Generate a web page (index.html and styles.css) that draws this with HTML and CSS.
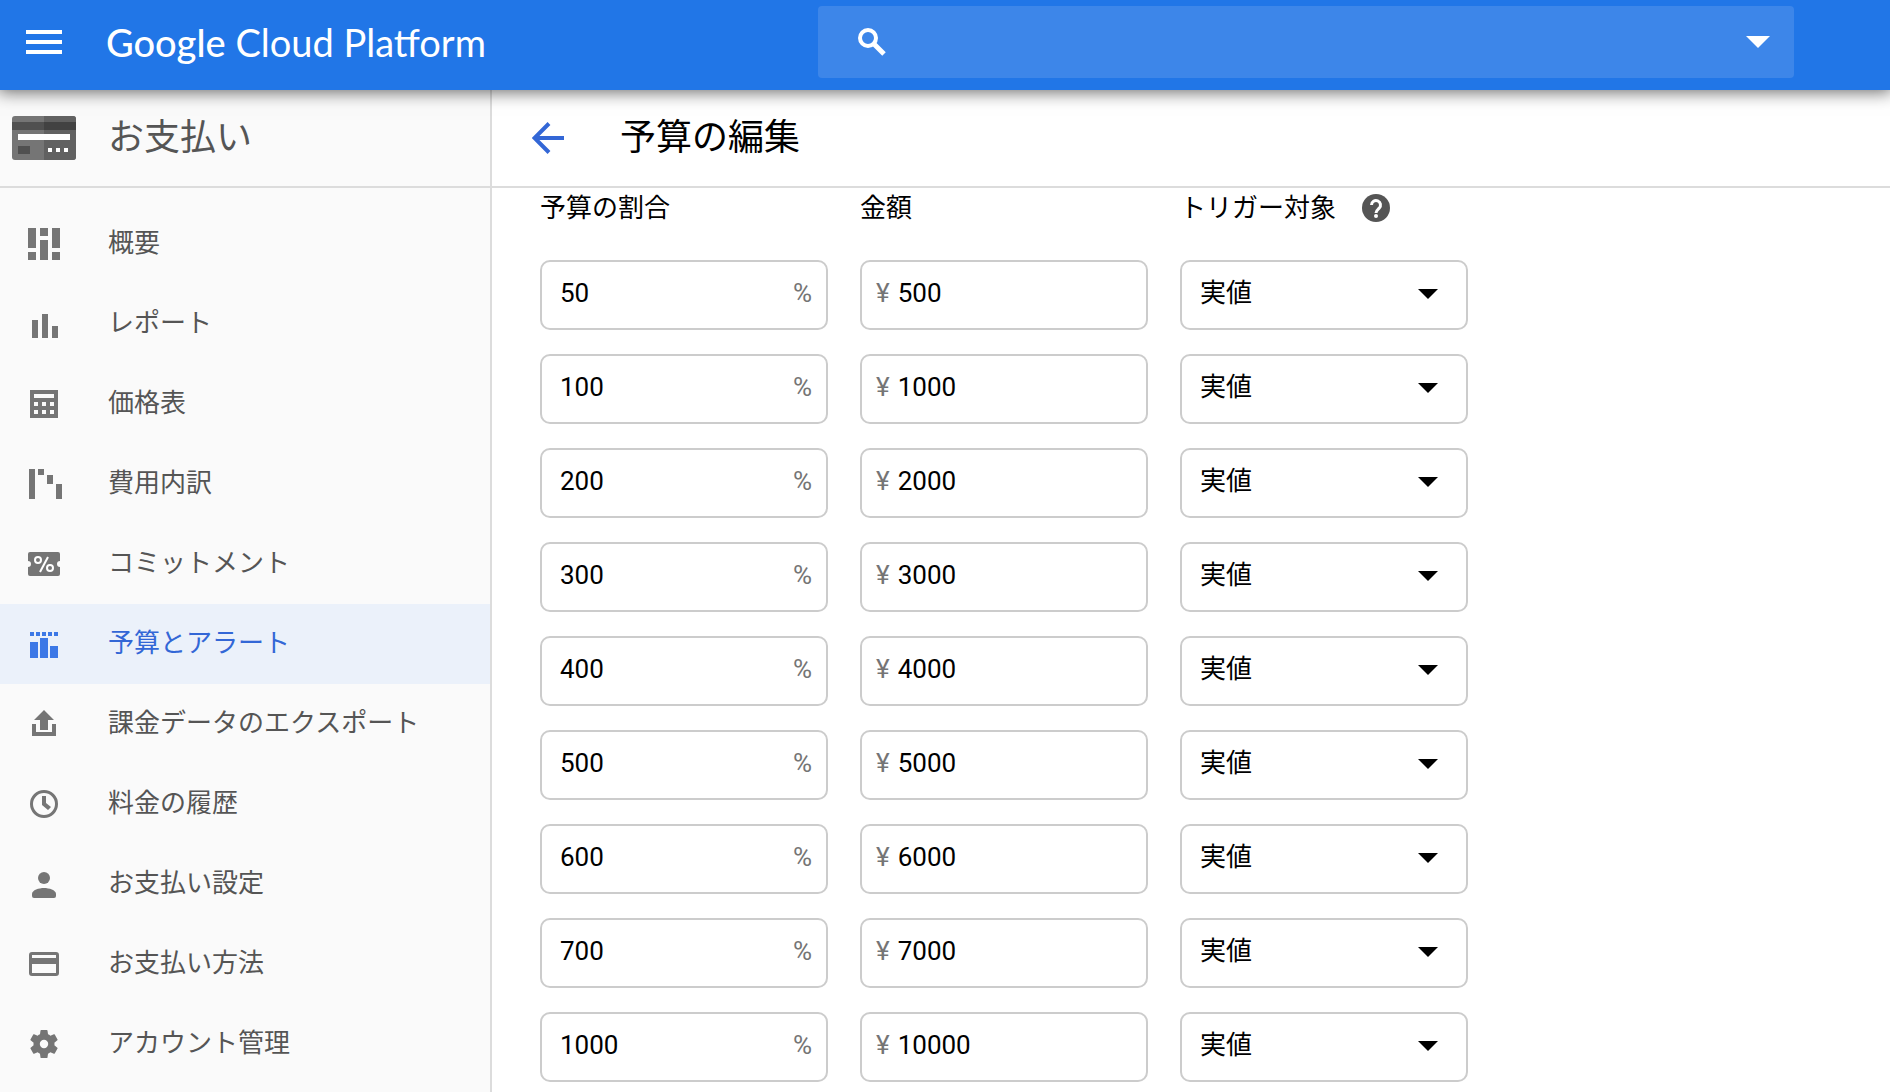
FILE: index.html
```
<!DOCTYPE html>
<html lang="ja">
<head>
<meta charset="utf-8">
<meta name="viewport" content="width=device-width, initial-scale=1">
<title>予算の編集 - Google Cloud Platform</title>
<link rel="stylesheet" href="styles.css">
</head>
<body>
<header class="topbar">
  <button class="icon-button" type="button" aria-label="メニュー">
    <svg width="36" height="24" viewBox="0 0 36 24" fill="currentColor"><path d="M0 0h36v4H0zM0 10h36v4H0zM0 20h36v4H0z"/></svg>
  </button>
  <a class="brand" href="#"><span class="brand-google">Google</span> Cloud Platform</a>
  <form class="search">
    <svg width="28" height="28" viewBox="0 0 28 28" fill="none" stroke="currentColor"><circle cx="10" cy="10" r="8" stroke-width="4"/><path d="M16 16l10 10" stroke-width="5"/></svg>
    <input class="search-input" type="search" aria-label="検索">
    <button class="icon-button" type="button" aria-label="検索オプション">
      <svg width="24" height="12" viewBox="0 0 24 12" fill="currentColor"><path d="M0 0h24L12 12z"/></svg>
    </button>
  </form>
</header>

<div class="layout">
  <aside class="sidebar">
    <div class="section-head sidebar-head">
      <svg width="64" height="44" viewBox="0 0 64 44"><rect width="64" height="44" rx="3" fill="#757575"/><path d="M32 0h29a3 3 0 0 1 3 3v38a3 3 0 0 1-3 3H32z" fill="#616161"/><path d="M0 6h32v8H0zM6 30h12v8H6z" fill="#505050"/><path d="M32 6h32v8H32z" fill="#424242"/><path d="M6 18h52v6H6zM36 32h4v4h-4zM44 32h4v4h-4zM52 32h4v4h-4z" fill="#fff"/></svg>
      <h2 class="section-title">お支払い</h2>
    </div>
    <nav class="nav" aria-label="お支払い">
      <a class="nav-item" href="#"><svg class="nav-icon" viewBox="0 0 32 32"><path d="M0 0h8v20H0zM0 24h8v8H0zM12 0h8v8h-8zM12 12h8v20h-8zM24 0h8v20h-8zM24 24h8v8h-8z"/></svg><span class="nav-label">概要</span></a>
      <a class="nav-item" href="#"><svg class="nav-icon" viewBox="0 0 32 32"><path d="M4 12h6v18H4zM14 6h6v24h-6zM24 18h6v12h-6z"/></svg><span class="nav-label">レポート</span></a>
      <a class="nav-item" href="#"><svg class="nav-icon" viewBox="0 0 32 32"><path fill-rule="evenodd" d="M2 2h28v28H2zM6 6v4h20V6zM6 14v4h4v-4zM14 14v4h4v-4zM22 14v4h4v-4zM6 22v4h4v-4zM14 22v4h4v-4zM22 22v4h4v-4z"/></svg><span class="nav-label">価格表</span></a>
      <a class="nav-item" href="#"><svg class="nav-icon" viewBox="0 0 32 32"><path d="M1 1h6v30H1zM10 1h6v6h-6zM19 7h6v9h-6zM28 16h6v15h-6z"/></svg><span class="nav-label">費用内訳</span></a>
      <a class="nav-item" href="#"><svg class="nav-icon" viewBox="0 0 32 32"><path d="M2 4h28a2 2 0 0 1 2 2v7a3 3 0 0 0 0 6v7a2 2 0 0 1-2 2H2a2 2 0 0 1-2-2v-7a3 3 0 0 0 0-6V6a2 2 0 0 1 2-2z"/><g fill="none" stroke="#fff" stroke-width="2"><circle cx="10" cy="12" r="3"/><circle cx="22" cy="20" r="3"/><path d="M20 9l-8 15"/></g></svg><span class="nav-label">コミットメント</span></a>
      <a class="nav-item nav-item-active" href="#" aria-current="page"><svg class="nav-icon" viewBox="0 0 32 32"><path d="M2 4h4v4H2zM8 4h4v4H8zM14 4h4v4h-4zM20 4h4v4h-4zM26 4h4v4h-4zM2 14h8v16H2zM12 10h8v20h-8zM22 18h8v12h-8z"/></svg><span class="nav-label">予算とアラート</span></a>
      <a class="nav-item" href="#"><svg class="nav-icon" viewBox="0 0 32 32"><path d="M16 2l10 10h-6v10h-8V12H6zM4 16h4v8h16v-8h4v12H4z"/></svg><span class="nav-label">課金データのエクスポート</span></a>
      <a class="nav-item" href="#"><svg class="nav-icon" viewBox="0 0 32 32"><circle cx="16" cy="16" r="12.5" fill="none" stroke="currentColor" stroke-width="3"/><path d="M14 8h4v7l5 4-3 3-6-5z"/></svg><span class="nav-label">料金の履歴</span></a>
      <a class="nav-item" href="#"><svg class="nav-icon" viewBox="0 0 32 32"><circle cx="16" cy="10" r="6"/><path d="M4 26c0-4 7-6 12-6s12 2 12 6v2a2 2 0 0 1-2 2H6a2 2 0 0 1-2-2z"/></svg><span class="nav-label">お支払い設定</span></a>
      <a class="nav-item" href="#"><svg class="nav-icon" viewBox="0 0 32 32"><path fill-rule="evenodd" d="M4 4h24a3 3 0 0 1 3 3v18a3 3 0 0 1-3 3H4a3 3 0 0 1-3-3V7a3 3 0 0 1 3-3zM4 7v3h24V7zM4 16v9h24v-9z"/></svg><span class="nav-label">お支払い方法</span></a>
      <a class="nav-item" href="#"><svg class="nav-icon" viewBox="0 0 32 32"><path transform="translate(-.8 -.8) scale(1.4)" d="M19.43 12.98c.04-.32.07-.64.07-.98s-.03-.66-.07-.98l2.11-1.65c.19-.15.24-.42.12-.64l-2-3.46c-.12-.22-.39-.3-.61-.22l-2.49 1c-.52-.4-1.08-.73-1.69-.98l-.38-2.65C14.46 2.18 14.25 2 14 2h-4c-.25 0-.46.18-.49.42l-.38 2.65c-.61.25-1.17.59-1.69.98l-2.49-1c-.23-.09-.49 0-.61.22l-2 3.46c-.13.22-.07.49.12.64l2.11 1.65c-.04.32-.07.65-.07.98s.03.66.07.98l-2.11 1.65c-.19.15-.24.42-.12.64l2 3.46c.12.22.39.3.61.22l2.49-1c.52.4 1.08.73 1.69.98l.38 2.65c.03.24.24.42.49.42h4c.25 0 .46-.18.49-.42l.38-2.65c.61-.25 1.17-.59 1.69-.98l2.49 1c.23.09.49 0 .61-.22l2-3.46c.12-.22.07-.49-.12-.64l-2.11-1.65zM12 15a3 3 0 1 1 0-6 3 3 0 0 1 0 6z"/></svg><span class="nav-label">アカウント管理</span></a>
    </nav>
  </aside>

  <main class="main">
    <div class="section-head main-head">
      <button class="icon-button back" type="button" aria-label="戻る">
        <svg width="32" height="32" viewBox="0 0 32 32" fill="none" stroke="currentColor" stroke-width="4"><path d="M32 16H3M17 1.500L2.500 16 17 30.500"/></svg>
      </button>
      <h1 class="section-title">予算の編集</h1>
    </div>
    <form class="thresholds" id="thresholds">
      <div class="column-title" id="col-percent">予算の割合</div>
      <div class="column-title" id="col-amount">金額</div>
      <div class="column-title"><span id="col-trigger">トリガー対象</span>
        <button class="icon-button help" type="button" aria-label="ヘルプ">
          <svg width="28" height="28" viewBox="0 0 28 28" fill="none" stroke="#fff" stroke-width="3"><circle cx="14" cy="14" r="14" fill="currentColor" stroke="none"/><path d="M9.500 11a4.500 4.500 0 1 1 7.700 3.200C15.200 16 14 16.500 14 19"/><circle cx="14" cy="22" r="2" fill="#fff" stroke="none"/></svg>
        </button>
      </div>
    </form>
  </main>
</div>
<script src="app.js"></script>
</body>
</html>
```
FILE: styles.css
```
* {
  box-sizing: border-box;
}

body {
  margin: 0;
  min-height: 100vh;
  display: flex;
  flex-direction: column;
  background: #fff;
  color: #000;
  font-family: Roboto, "Noto Sans CJK JP", sans-serif;
  font-size: 26px;
  line-height: 36px;
}

svg {
  display: block;
  flex: none;
}

input,
select {
  min-width: 0;
  margin: 0;
  padding: 0;
  border: 0;
  outline: 0;
  background: transparent;
  color: inherit;
  font: inherit;
}

.icon-button {
  flex: none;
  padding: 0;
  border: 0;
  background: none;
  color: inherit;
  cursor: pointer;
}

/* Top bar */
.topbar {
  position: relative;
  z-index: 1;
  display: flex;
  align-items: center;
  height: 90px;
  padding: 0 96px 6px 26px;
  background: #2176e7;
  color: #fff;
  box-shadow: 0 0 16px 2px rgba(0, 0, 0, 0.6);
}

.brand {
  margin-left: 44px;
  color: inherit;
  font-family: Lato, sans-serif;
  font-size: 38px;
  line-height: 48px;
  text-decoration: none;
  white-space: nowrap;
}

.brand-google {
  font-weight: 500;
}

.search {
  display: flex;
  align-items: center;
  gap: 24px;
  flex: 0 1 976px;
  height: 72px;
  margin-left: auto;
  padding: 0 24px 0 40px;
  border-radius: 4px;
  background: #3d86e9;
}

.search-input {
  flex: 1;
  height: 48px;
}

/* Page frame */
.layout {
  flex: 1;
  display: flex;
}

.sidebar {
  flex: 0 0 492px;
  border-right: 2px solid #dcdcdc;
  background: #fafafa;
  color: #555;
}

.section-head {
  display: flex;
  align-items: center;
  height: 98px;
  border-bottom: 2px solid #dcdcdc;
}

.sidebar-head {
  gap: 32px;
  padding-left: 12px;
}

.main-head {
  gap: 56px;
  padding-left: 40px;
}

.section-title {
  margin: 0;
  font-size: 36px;
  font-weight: 400;
  line-height: 48px;
}

.back {
  color: #3367d6;
}

/* Side navigation */
.nav {
  padding: 16px 0 8px;
}

.nav-item {
  display: flex;
  align-items: center;
  gap: 48px;
  height: 80px;
  padding-left: 28px;
  color: #555;
  text-decoration: none;
}

.nav-label {
  padding-bottom: 2px;
}

.nav-icon {
  width: 32px;
  height: 32px;
  overflow: visible;
  fill: currentColor;
  color: #757575;
}

.nav-item-active {
  background: #ebf1fa;
  color: #3367d6;
}

.nav-item-active .nav-icon {
  color: #3c78e6;
}

/* Budget thresholds */
.main {
  flex: 1;
  min-width: 0;
}

.thresholds {
  display: grid;
  grid-template-columns: repeat(3, minmax(0, 288px));
  gap: 24px 32px;
  padding: 0 48px 8px;
}

.column-title {
  display: flex;
  align-items: center;
  gap: 26px;
  height: 40px;
  margin-bottom: 8px;
}

.help {
  color: #555;
}

.field {
  position: relative;
  display: flex;
  align-items: center;
  gap: 8px;
  height: 70px;
  padding: 0 14px 4px;
  border: 2px solid #ccc;
  border-radius: 10px;
}

.field-percent {
  padding-left: 18px;
}

.field-input {
  flex: 1;
  height: 48px;
}

.field-unit {
  color: #757575;
}

.field-select {
  padding: 0;
}

.select {
  appearance: none;
  width: 100%;
  height: 66px;
  padding: 0 64px 4px 18px;
}

.select-arrow {
  position: absolute;
  top: 27px;
  right: 28px;
  pointer-events: none;
}
```
FILE: app.js
```
const thresholds = [
  [50, 500], [100, 1000], [200, 2000], [300, 3000], [400, 4000],
  [500, 5000], [600, 6000], [700, 7000], [1000, 10000],
];

document.getElementById("thresholds").insertAdjacentHTML(
  "beforeend",
  thresholds.map(([percent, amount]) => `
    <div class="field field-percent">
      <input class="field-input" type="text" inputmode="numeric" value="${percent}" aria-labelledby="col-percent">
      <span class="field-unit">%</span>
    </div>
    <div class="field">
      <span class="field-unit">¥</span>
      <input class="field-input" type="text" inputmode="numeric" value="${amount}" aria-labelledby="col-amount">
    </div>
    <div class="field field-select">
      <select class="select" aria-labelledby="col-trigger"><option>実値</option></select>
      <svg class="select-arrow" width="20" height="10" viewBox="0 0 20 10"><path d="M0 0h20L10 10z"/></svg>
    </div>`).join("")
);
```
